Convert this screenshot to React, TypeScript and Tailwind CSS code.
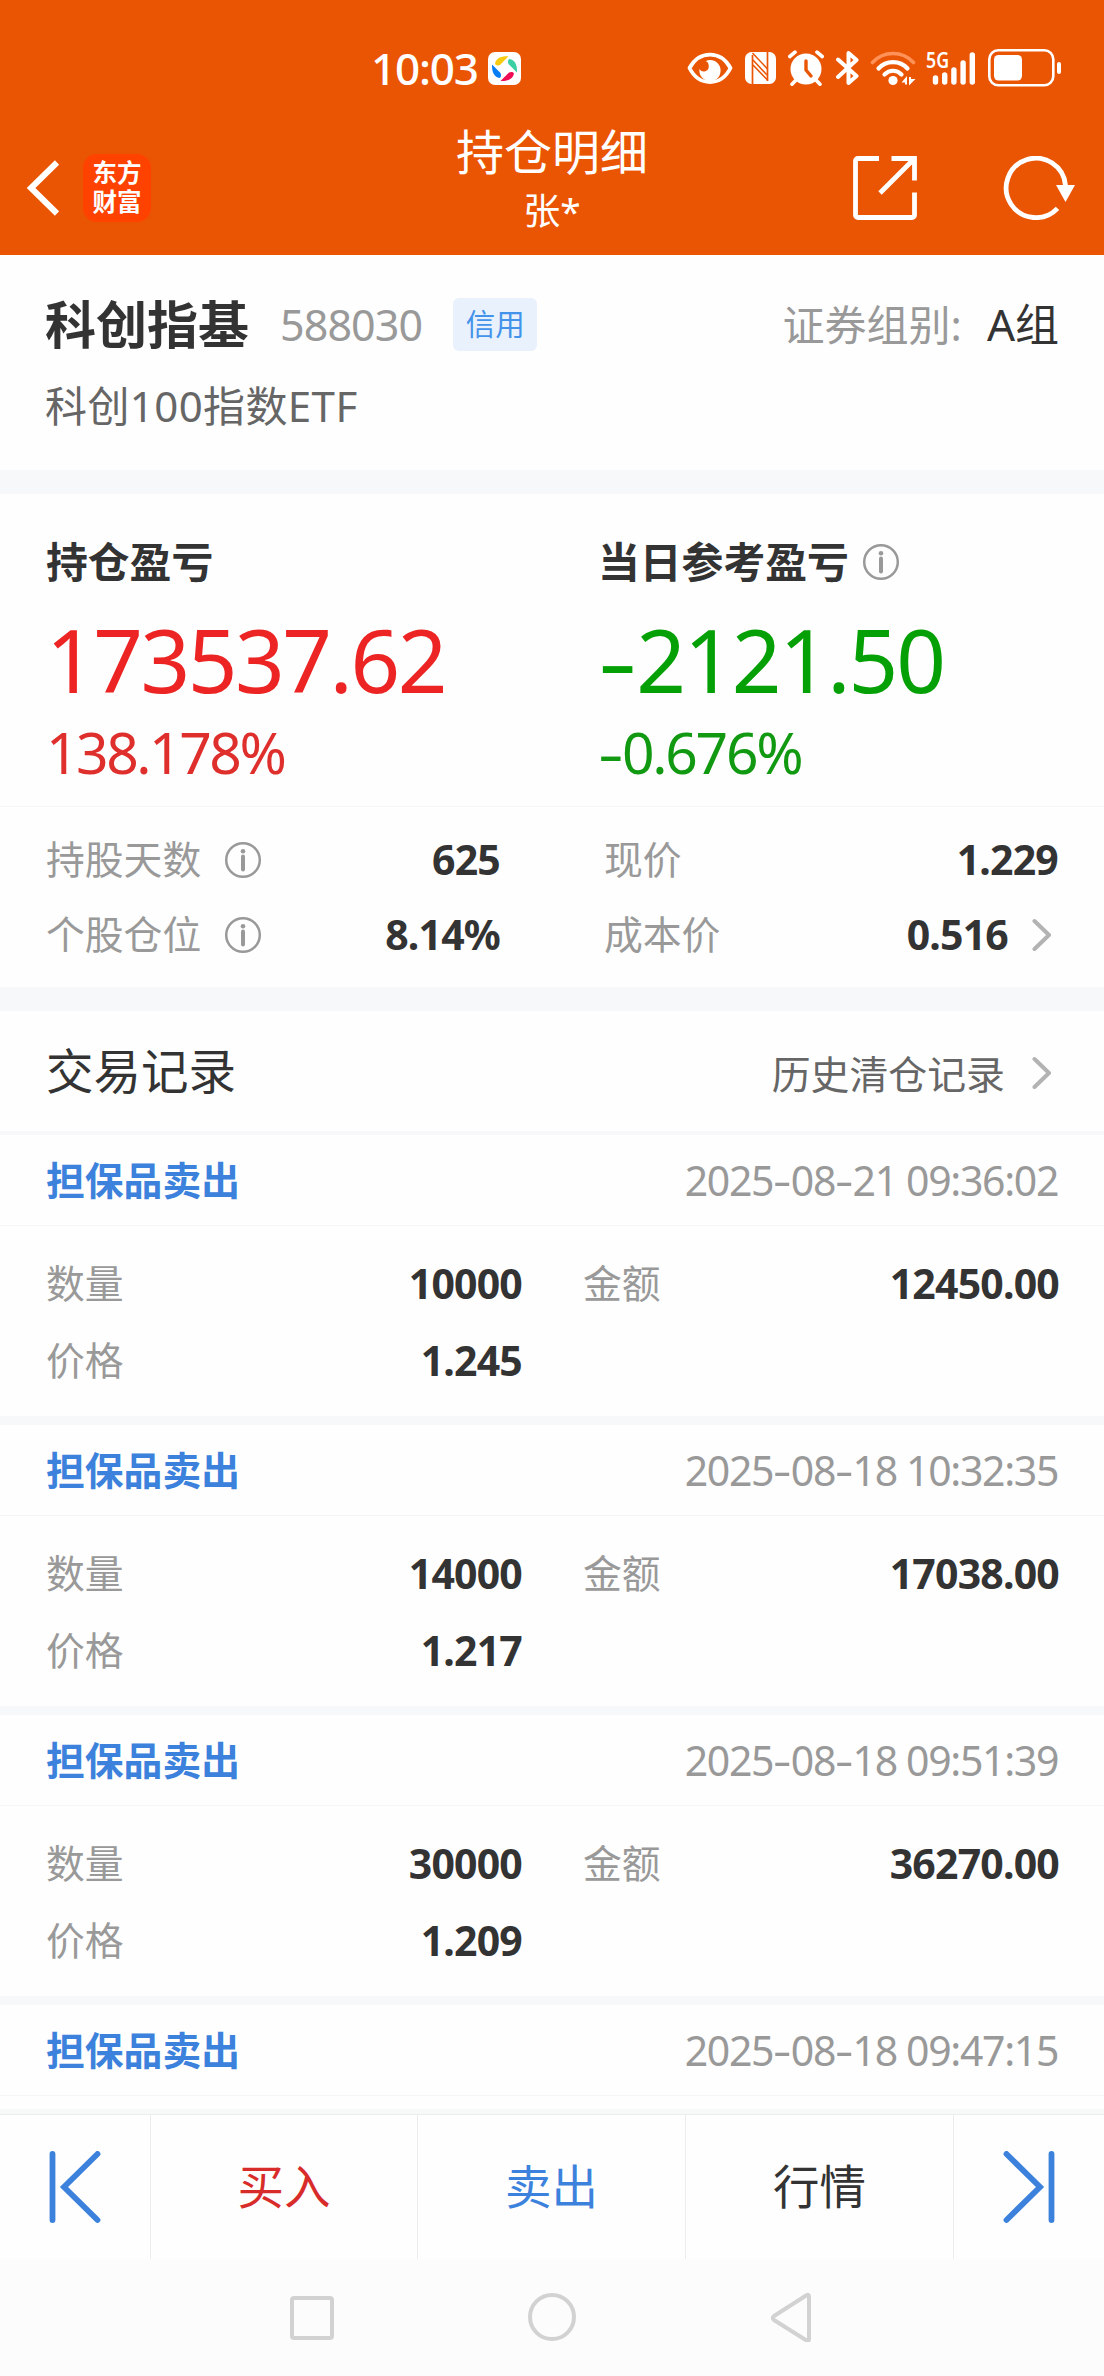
import type { ReactNode } from "react";

const records = [
  { time: "2025-08-21 09:36:02", qty: "10000", amount: "12450.00", price: "1.245" },
  { time: "2025-08-18 10:32:35", qty: "14000", amount: "17038.00", price: "1.217" },
  { time: "2025-08-18 09:51:39", qty: "30000", amount: "36270.00", price: "1.209" },
  { time: "2025-08-18 09:47:15", qty: "", amount: "", price: "" },
];

function InfoIcon() {
  return (
    <svg width="38" height="38" viewBox="0 0 38 38" fill="none" stroke="#999" strokeWidth="2.5" className="shrink-0">
      <circle cx="19" cy="19" r="16.8" />
      <circle cx="19" cy="10.2" r="2.3" fill="#999" stroke="none" />
      <path d="M19 15.5v13" strokeWidth="4" strokeLinecap="round" />
    </svg>
  );
}

function Chevron() {
  return (
    <svg width="20" height="34" viewBox="0 0 20 34" fill="none" stroke="#b3b3b3" strokeWidth="4" strokeLinecap="round" strokeLinejoin="round" className="shrink-0">
      <path d="M2.5 3 17 17 2.5 31" />
    </svg>
  );
}

// Wide hyphen, stretched to the width of the numerals
function Dash() {
  return <span className="mr-[0.14em] inline-block origin-left scale-x-[1.4]">-</span>;
}

function StatusIcons() {
  return (
    <div className="flex items-center text-white">
      <svg width="46" height="34" viewBox="0 0 46 34" fill="none">
        <path d="M2.500 17C7 9 14.500 3.700 23 3.700S39 9 43.500 17C39 26 31.500 31 23 31S7 26 2.500 17Z" stroke="#fff" strokeWidth="3.800" strokeLinejoin="round" />
        <path d="M23 9a10.600 10.600 0 1 1-10.500 9c1.200 2 3.200 2.900 5.200 2.400 3.300-.8 4.300-3.400 4-6-.2-2-.9-3.800-3-4.200 1.200-.8 2.700-1.200 4.300-1.200Z" fill="#fff" />
      </svg>
      <svg width="31" height="34" viewBox="0 0 31 34" className="ml-[12px]">
        <rect x="0" y="1" width="31" height="32" rx="6.500" fill="#fff" />
        <path d="M7.500 4v29M22.500 1v29" stroke="#ea5504" strokeWidth="1.700" fill="none" />
        <path d="M7.500 2 22.500 18M8 14l14.500 15M8 9l14 15" stroke="#ea5504" strokeWidth="1.500" fill="none" />
      </svg>
      <svg width="36" height="36" viewBox="0 0 36 36" fill="none" stroke="#fff" strokeLinecap="round" className="ml-[12px]">
        <circle cx="18" cy="19" r="15.500" fill="#fff" stroke="none" />
        <path d="M1.800 6.500 7 2.200M34.200 6.500 29 2.200M8 30l-4 4.200M28 30l4 4.200" strokeWidth="3.600" />
        <path d="M18 11v9l5 6" stroke="#ea5504" strokeWidth="3.400" />
      </svg>
      <svg width="23" height="36" viewBox="0 0 23 36" fill="none" stroke="#fff" strokeWidth="4" strokeLinejoin="round" strokeLinecap="round" className="ml-[12px]">
        <path d="M2 9.500 20.500 26 12.500 33V3L20.500 10 2 27" />
      </svg>
      <svg width="46" height="36" viewBox="0 0 46 36" fill="none" stroke="#fff" strokeWidth="4.200" strokeLinecap="round" className="ml-[11px]">
        <path d="M2.500 12.500C13.500 .5 32.500 .5 43.500 12.500" stroke="#ff9259" strokeWidth="3.600" />
        <path d="M8.500 18.500C16 10 30 10 37.500 18.500M14.500 24.500C19.500 19.500 26.500 19.500 31.500 24.500" />
        <circle cx="23" cy="30.500" r="4.600" fill="#fff" stroke="none" />
        <path d="M31.500 32.500 37 26v8.500h-2V32.500ZM39 35.500V27h2v2h4.500Z" fill="#fff" stroke="none" />
      </svg>
      <svg width="52" height="56" viewBox="0 -10 52 56" fill="none" stroke="#fff" strokeWidth="5.400" strokeLinecap="round" className="ml-[9px]">
        <text x="1" y="18" fill="#fff" stroke="none" fontSize="22" fontWeight="600" textLength="23" lengthAdjust="spacingAndGlyphs">5G</text>
        <path d="M10.500 28v4M19.700 25v7M28.900 20v12M38.100 13v19M47.300 5v27" />
      </svg>
      <svg width="74" height="38" viewBox="0 0 74 38" fill="none" className="ml-[11px]">
        <rect x="1.300" y="1.300" width="64" height="35" rx="9" stroke="#fff" strokeWidth="2.600" />
        <rect x="6" y="6" width="28" height="25.500" rx="4.500" fill="#fff" />
        <rect x="69" y="13" width="4" height="12" rx="2" fill="#fff" />
      </svg>
    </div>
  );
}

function Header() {
  return (
    <header className="flex h-[255px] shrink-0 flex-col bg-[#ea5504] text-white">
      <div className="flex h-[136px] shrink-0 items-center justify-between pl-[371px] pr-[42px]">
        <div className="flex items-center gap-[11px]">
          <span className="w-[106px] whitespace-nowrap text-[44px] leading-none font-medium tracking-[-1.2px]">10:03</span>
          <svg width="33" height="33" viewBox="0 0 33 33">
            <rect width="33" height="33" rx="7" fill="#fff" />
            <path d="M7 11.500C8 6.500 12 4 20.500 4.200L12 13C9.500 14 7.500 13.500 7 11.500Z" fill="#f7cc10" />
            <path d="M21.500 7C26.500 8 29.300 12 29 20.500L20.500 12C19.500 9.500 20 7.500 21.500 7Z" fill="#3ccfa4" />
            <path d="M26 21.500C25 26.500 21 29.300 12.500 29L21 20.500C23.500 19.500 25.500 20 26 21.500Z" fill="#f00b55" />
            <path d="M11.500 26C6.500 25 3.800 21 4 12.500L12.500 21C13.500 23.500 13 25.500 11.500 26Z" fill="#067df5" />
          </svg>
        </div>
        <StatusIcons />
      </div>
      <div className="-mt-4 flex h-[135px] shrink-0 items-center">
        <div className="flex w-[300px] items-center gap-[23px] pl-[26px]">
          <svg width="34" height="56" viewBox="0 0 34 56" fill="none" stroke="#fff" strokeWidth="6">
            <path d="M31 2.500 5 28 31 53.500" />
          </svg>
          <div className="flex h-[68px] w-[68px] flex-col items-center justify-center rounded-[14px] bg-[#ff4200] text-[24.5px] leading-[28.500px] font-bold">
            <span>东方</span>
            <span>财富</span>
          </div>
        </div>
        <div className="mb-[13px] flex flex-1 flex-col items-center leading-[59px]">
          <h1 className="text-[48px]">持仓明细</h1>
          <span className="text-[37px]">张*</span>
        </div>
        <div className="flex w-[300px] items-center justify-end gap-[86px] pr-[28px]">
          <svg width="64" height="64" viewBox="0 0 64 64" fill="none" stroke="#fff" strokeWidth="4.800">
            <path d="M26 2.500H5a2.500 2.500 0 0 0-2.500 2.500v54a2.500 2.500 0 0 0 2.500 2.500h54a2.500 2.500 0 0 0 2.500-2.500V36.500M38.500 2.500h23V24.500M61 3 27 37" />
          </svg>
          <svg width="73" height="64" viewBox="0 0 73 64" fill="none">
            <path d="M62.500 29.500A29.700 29.700 0 1 0 54.500 52.300" stroke="#fff" strokeWidth="4.800" />
            <path d="M53 29h19L62.500 46Z" fill="#fff" />
          </svg>
        </div>
      </div>
    </header>
  );
}

function Field({ label, value, children }: { label: string; value: string; children?: ReactNode }) {
  return (
    <div className="flex items-center">
      <span className="text-[38.800px] text-[#999]">{label}</span>
      {children}
      <span className="ml-auto text-[41px] font-bold tracking-[-0.800px]">{value}</span>
    </div>
  );
}

function RecordHead({ time }: { time: string }) {
  const [year, month, rest] = time.split("-");
  return (
    <div className="flex h-[91px] shrink-0 items-center justify-between border-b border-[#f5f6f7] px-[46px]">
      <span className="text-[38.800px] font-bold text-[#3c82dc]">担保品卖出</span>
      <span className="mt-[2px] text-[41px] tracking-[-1.350px] whitespace-nowrap text-[#999]">
        {year}<Dash />{month}<Dash />{rest}
      </span>
    </div>
  );
}

export default function App() {
  return (
    <div className="flex h-[2376px] w-[1104px] flex-col overflow-hidden bg-[#fefefe] font-['Noto_Sans','Noto_Sans_CJK_SC',sans-serif] text-[#333]">
      <Header />

      {/* Security */}
      <section className="h-[215px] shrink-0 px-[45px] pt-[38px]">
        <div className="flex h-[62px] items-center">
          <h2 className="text-[51px] leading-none font-bold">科创指基</h2>
          <span className="ml-[31px] text-[43px] leading-none tracking-[-0.900px] text-[#999]">588030</span>
          <span className="ml-[31px] flex h-[53px] w-[84px] items-center justify-center rounded-[6px] bg-[#e8f1fc] text-[29.500px] text-[#4493ea]">信用</span>
          <span className="ml-auto text-[42px] text-[#999]">证券组别:</span>
          <span className="ml-[25px] text-[44px]">A组</span>
        </div>
        <div className="mt-[22px] text-[42px] leading-[58px] tracking-[0.400px] text-[#666]">科创100指数ETF</div>
      </section>
      <div className="h-[24px] shrink-0 bg-[#f7f8fa]" />

      {/* Profit and loss */}
      <section className="grid h-[313px] shrink-0 grid-cols-2 border-b border-[#f5f6f7] pt-[38px]">
        <div className="pl-[46px]">
          <div className="text-[41.800px] leading-[60px] font-bold">持仓盈亏</div>
          <div className="mt-[17px] text-[87px] leading-[100px] tracking-[-2.500px] text-[#ec2524]">173537.62</div>
          <div className="mt-[13px] text-[57px] leading-[60px] tracking-[-2.500px] text-[#de2f2c]">138.178%</div>
        </div>
        <div className="pl-[46px]">
          <div className="flex items-center gap-[13px] text-[41.800px] leading-[60px] font-bold">
            当日参考盈亏
            <InfoIcon />
          </div>
          <div className="mt-[17px] text-[87px] leading-[100px] tracking-[-2px] text-[#05a005]">
            <Dash />2121.50
          </div>
          <div className="mt-[13px] text-[57px] leading-[60px] tracking-[-2.300px] text-[#129912]">
            <Dash />0.676%
          </div>
        </div>
      </section>

      <section className="grid h-[180px] shrink-0 grid-cols-[454px_454px] content-start gap-x-[104px] pt-[15px] pl-[46px] leading-[75px]">
        <Field label="持股天数" value="625">
          <span className="ml-[23px]"><InfoIcon /></span>
        </Field>
        <Field label="现价" value="1.229" />
        <Field label="个股仓位" value="8.14%">
          <span className="ml-[23px]"><InfoIcon /></span>
        </Field>
        <div className="flex items-center">
          <span className="text-[38.800px] text-[#999]">成本价</span>
          <span className="ml-auto text-[41px] font-bold tracking-[-0.800px]">0.516</span>
          <span className="mr-[6px] ml-[24px]"><Chevron /></span>
        </div>
      </section>
      <div className="h-[24px] shrink-0 bg-[#f7f8fa]" />

      {/* Trade records */}
      <section className="flex h-[124px] shrink-0 items-center border-b-4 border-[#f6f8f9] pr-[52px] pl-[46px]">
        <h2 className="text-[47.500px]">交易记录</h2>
        <span className="mt-[6px] mr-[27px] ml-auto text-[38.900px] text-[#666]">历史清仓记录</span>
        <span className="mt-[4px]"><Chevron /></span>
      </section>

      {records.slice(0, 3).map((r) => (
        <article key={r.time} className="flex h-[290px] shrink-0 flex-col border-b-[9px] border-[#f7f8fa]">
          <RecordHead time={r.time} />
          <div className="grid grid-cols-[476px_476px] gap-x-[61px] pt-[19px] pl-[46px] leading-[77px]">
            <Field label="数量" value={r.qty} />
            <Field label="金额" value={r.amount} />
            <Field label="价格" value={r.price} />
          </div>
        </article>
      ))}
      <article className="h-[109px] shrink-0 border-b-[5px] border-[#f7f9f9]">
        <RecordHead time={records[3].time} />
      </article>

      {/* Action bar */}
      <div className="grid h-[145px] shrink-0 grid-cols-[151px_267px_268px_268px_150px] border-t border-[#ececec] text-[46.500px] *:flex *:items-center *:justify-center *:border-r *:border-[#ececec]">
        <button>
          <svg width="52" height="72" viewBox="0 0 52 72" fill="none" stroke="#3c82dc" strokeWidth="5.800" strokeLinecap="round">
            <path d="M3.500 3v66M48.500 3 15 36 48.500 69" />
          </svg>
        </button>
        <button className="text-[#d82c2b]">买入</button>
        <button className="text-[#3c82dc]">卖出</button>
        <button>行情</button>
        <button className="border-r-0!">
          <svg width="52" height="72" viewBox="0 0 52 72" fill="none" stroke="#3c82dc" strokeWidth="5.800" strokeLinecap="round">
            <path d="M48.500 3v66M3.500 3 37 36 3.500 69" />
          </svg>
        </button>
      </div>

      {/* System navigation */}
      <nav className="flex h-[117px] shrink-0 items-start justify-center gap-[192px] bg-[#fcfcfc] pt-[33px]">
        <svg width="48" height="50" viewBox="0 0 48 50" fill="none" stroke="#d2d2d2" strokeWidth="4">
          <rect x="4" y="6" width="40" height="40" rx="2" />
        </svg>
        <svg width="48" height="50" viewBox="0 0 48 50" fill="none" stroke="#d2d2d2" strokeWidth="4">
          <circle cx="24" cy="25" r="22" />
        </svg>
        <svg width="48" height="50" viewBox="0 0 48 50" fill="none" stroke="#d2d2d2" strokeWidth="4" strokeLinejoin="round">
          <path d="M41 4.500Q41 2 38.500 3.200L6 24Q3.500 26 6 28L38.500 48.500Q41 49.500 41 47Z" />
        </svg>
      </nav>
    </div>
  );
}
